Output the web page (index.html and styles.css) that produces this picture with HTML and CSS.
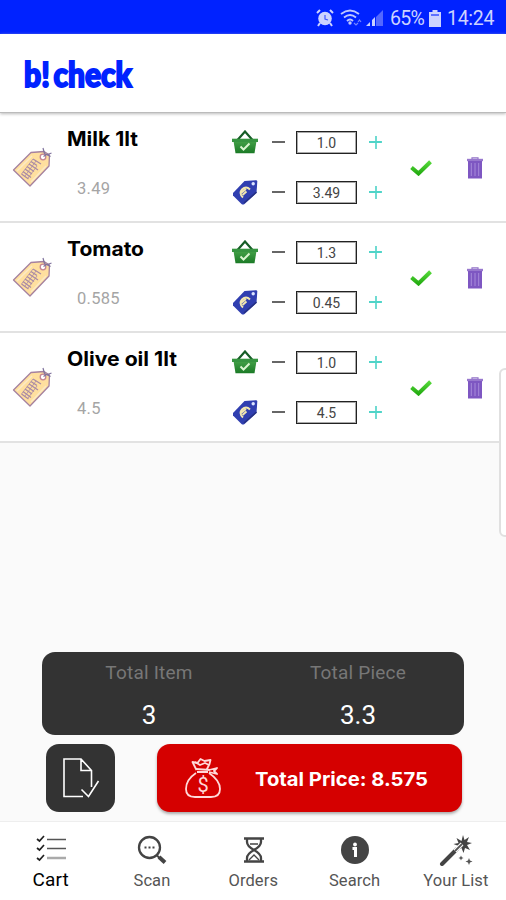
FILE: index.html
```html
<!DOCTYPE html>
<html lang="en">
<head>
<meta charset="utf-8">
<title>b! check</title>
<link rel="stylesheet" href="styles.css">
</head>
<body>
<svg class="defs" width="0" height="0" aria-hidden="true">
  <defs>
    <linearGradient id="green" x1="0" y1="0" x2="0" y2="1"><stop offset="0" stop-color="#43a047"/><stop offset="1" stop-color="#1b7a26"/></linearGradient>
    <linearGradient id="tick" x1="0" y1="0" x2="0" y2="1"><stop offset="0" stop-color="#55d83a"/><stop offset="1" stop-color="#25ad12"/></linearGradient>
  </defs>
  <symbol id="tag" viewBox="0 0 40 42">
    <path d="M1.500 24 19 6.500 32 5.500 37.500 9 37 20 18 40Z" fill="#ffdf9e" stroke="#a5819f" stroke-width="1.300" stroke-linejoin="round"/>
    <path d="M5 25 20 10M19 36 34 20" stroke="#fbeac6" stroke-width="1.500"/>
    <g stroke="#a98aa6" stroke-width="1.300"><path d="m21 13 8 5M19 15.500l6 4M17 18l9 6M15 20.500l7 5M13 23l7 5M11 25.500l8 6M9.500 28l7 5"/><path d="M21 13 9.500 28M24 15 13 30M25 20 16 32" stroke-width=".8"/></g>
    <circle cx="31" cy="11" r="2.800" fill="#fff" stroke="#c58493" stroke-width="1.300"/>
    <path d="m31.500 10.500 3-2M31 2l1.500 5.500 6 3M39.500 7l-5 2" fill="none" stroke="#80739d" stroke-width="1.200"/>
  </symbol>
  <symbol id="basket" viewBox="0 0 28 24">
    <path d="m6.500 10 7.500-8.500 7.500 8.500" fill="none" stroke="#155c26" stroke-width="2.200"/>
    <path d="M2.500 11h23l-2 12.300h-19Z" fill="url(#green)"/>
    <path d="M1 8.700h26v3.300H1z" fill="#369440"/>
    <path d="m9.500 16.500 3 3 6-6" fill="none" stroke="#d9f5cf" stroke-width="2"/>
  </symbol>
  <symbol id="price" viewBox="0 0 28 28">
    <path d="M2 15 13.500 3l11.500-.8q1.300 0 1.300 1.300L25.500 15 13.500 26q-1.500 1.200-3 0L2 17.500Z" fill="#303fb0"/>
    <path d="M13 25 25.500 14" stroke="#263182" stroke-width="1.500"/>
    <circle cx="22.200" cy="5.800" r="1.700" fill="#dce4ff"/>
    <path d="M19 11.500q-4-4-8 0-3.500 4 1 8M10 15l5-4M11.500 17l4-3.500" fill="none" stroke="#f3e8b0" stroke-width="1.900"/>
  </symbol>
  <symbol id="check" viewBox="0 0 22 16"><path d="m1.500 7.500 7 6L20.500 1.800" fill="none" stroke="url(#tick)" stroke-width="4"/></symbol>
  <symbol id="trash" viewBox="0 0 18 22">
    <path d="M6 2V.8h6V2" fill="none" stroke="#9273c8" stroke-width="1.200"/>
    <path d="M1 1.800h16v2.400H1z" fill="#9878ce"/><path d="M2 4h14v17.500H2z" fill="#7e57c2"/>
    <path d="M5.300 6v13M9 6v13M12.700 6v13" stroke="#a78bda" stroke-width="1"/>
  </symbol>
</svg>

<div class="status">
  <svg width="18" height="18" viewBox="0 0 18 18"><circle cx="9" cy="9.500" r="6.800" fill="#ccd3ff"/><path d="m1 4 3-3M17 4l-3-3M4 14l-2 3M14 14l2 3" stroke="#ccd3ff" stroke-width="2"/><path d="M9 6v4l3 1" fill="none" stroke="#4057ff" stroke-width="1.200"/></svg>
  <svg class="wifi" width="22" height="18" viewBox="0 0 22 18"><path d="M1 5q9-7 18 0M4 8.500q6-5 12 0M7 12q3-3 6 0" fill="none" stroke="#bec7ff" stroke-width="1.800"/><circle cx="10" cy="14" r="1.700" fill="#bec7ff"/><path d="m14 14 2 2 2-2M18 13l1.500-2 1.500 2" fill="none" stroke="#7483ff" stroke-width="1.200"/></svg>
  <svg class="signal" width="18" height="18" viewBox="0 0 18 18"><path d="M0 17 4 13v4ZM6 11l3-3v9H6Z" fill="#c8d0ff"/><path d="m10 8 7-7v16h-7Z" fill="#5468ff"/></svg>
  <span class="pct">65%</span>
  <svg class="batt" width="12" height="17" viewBox="0 0 12 17"><path d="M3.500 0h5v2H12v15H0V2h3.500Z" fill="#ccd3ff"/><path d="M2 5h8" stroke="#5266ff" stroke-width="1.800"/></svg>
  <span class="time">14:24</span>
</div>

<header class="header">
  <svg class="logo" width="114" height="44" viewBox="0 0 114 44"><text class="logo-text" x="2" y="31" textLength="108" lengthAdjust="spacingAndGlyphs">b! check</text></svg>
</header>

<main class="list">
  <section class="row">
    <svg class="tag" width="40" height="42"><use href="#tag"/></svg>
    <div class="info"><svg class="name" width="150" height="28"><text x="1" y="21" textLength="71" lengthAdjust="spacingAndGlyphs">Milk 1lt</text></svg><span class="unit">3.49</span></div>
    <div class="controls">
      <div class="line"><svg width="28" height="24"><use href="#basket"/></svg><i class="minus"></i><span class="box">1.0</span><i class="plus"></i></div>
      <div class="line"><svg width="28" height="28"><use href="#price"/></svg><i class="minus"></i><span class="box">3.49</span><i class="plus"></i></div>
    </div>
    <svg class="check" width="22" height="16"><use href="#check"/></svg>
    <svg class="trash" width="18" height="22"><use href="#trash"/></svg>
  </section>
  <section class="row">
    <svg class="tag" width="40" height="42"><use href="#tag"/></svg>
    <div class="info"><svg class="name" width="150" height="28"><text x="1" y="21" textLength="77" lengthAdjust="spacingAndGlyphs">Tomato</text></svg><span class="unit">0.585</span></div>
    <div class="controls">
      <div class="line"><svg width="28" height="24"><use href="#basket"/></svg><i class="minus"></i><span class="box">1.3</span><i class="plus"></i></div>
      <div class="line"><svg width="28" height="28"><use href="#price"/></svg><i class="minus"></i><span class="box">0.45</span><i class="plus"></i></div>
    </div>
    <svg class="check" width="22" height="16"><use href="#check"/></svg>
    <svg class="trash" width="18" height="22"><use href="#trash"/></svg>
  </section>
  <section class="row">
    <svg class="tag" width="40" height="42"><use href="#tag"/></svg>
    <div class="info"><svg class="name" width="150" height="28"><text x="1" y="21" textLength="110" lengthAdjust="spacingAndGlyphs">Olive oil 1lt</text></svg><span class="unit">4.5</span></div>
    <div class="controls">
      <div class="line"><svg width="28" height="24"><use href="#basket"/></svg><i class="minus"></i><span class="box">1.0</span><i class="plus"></i></div>
      <div class="line"><svg width="28" height="28"><use href="#price"/></svg><i class="minus"></i><span class="box">4.5</span><i class="plus"></i></div>
    </div>
    <svg class="check" width="22" height="16"><use href="#check"/></svg>
    <svg class="trash" width="18" height="22"><use href="#trash"/></svg>
  </section>
</main>
<div class="edge"></div>

<div class="bottom">
  <section class="summary">
    <div><span class="label">Total Item</span><span class="value">3</span></div>
    <div><span class="label">Total Piece</span><span class="value">3.3</span></div>
  </section>
  <div class="actions">
    <div class="doc"><svg width="40" height="44" viewBox="0 0 40 44" fill="none" stroke="#fff" stroke-width="1.600"><path d="M22 40.500H3V3h17l10.500 11.500V31M20 3v11.500h10.500"/><path d="m20.500 33.500 7 7L37.500 25"/></svg></div>
    <div class="total">
      <svg width="38" height="42" viewBox="0 0 38 42" fill="none" stroke="#ffd9d9" stroke-width="1.800" stroke-linejoin="round"><path d="M12.500 13 8.500 5l5 1 3-4 4 2 6-1-1 4-3 6"/><path d="m11 5 5 3 5-2 4 2M12 12l14 1M13 15h11M25 13l8-2-3 3 3 3-8-2"/><path d="M12 16C6 20 2 26 2 32q0 8 9 8h16q9 0 9-8c0-6-5-12-11-16"/><text class="dollar" x="19" y="35">$</text></svg>
      <svg class="total-label" width="178" height="28"><text x="1" y="21" textLength="173" lengthAdjust="spacingAndGlyphs">Total Price: 8.575</text></svg>
    </div>
  </div>
</div>

<nav class="nav">
  <a class="active"><svg width="32" height="32" viewBox="0 0 32 32" fill="none" stroke="#222" stroke-width="1.700"><path d="m2 5 2.500 2L9 2M2 14l2.500 2L9 11M2 24l2.500 2L9 21"/><path d="M12 5.500h19M12 14.500h19" stroke="#555"/><path d="M12 24h19" stroke="#aaa" stroke-width="2.500"/></svg><span>Cart</span></a>
  <a><svg width="32" height="32" viewBox="0 0 32 32" fill="none" stroke="#444"><circle cx="13.500" cy="13.500" r="10.500" stroke-width="2.300"/><path d="m20.500 21 3 3" stroke-width="2"/><path d="m23 23 6 5.500" stroke-width="4"/><path d="M8.500 13.500h2M12.500 13.500h2M16.500 13.500h2" stroke-width="2"/></svg><span>Scan</span></a>
  <a><svg width="32" height="32" viewBox="0 0 32 32" fill="none" stroke="#444" stroke-width="2.300"><path d="M7 4.500h20M7 27.500h20M10 5v3q0 4 7 8-7 4-7 8v3M24 5v3q0 4-7 8 7 4 7 8v3"/><path d="m12 26 5-5 5 5M13 10h8" stroke-width="1.300"/></svg><span>Orders</span></a>
  <a><svg width="32" height="32" viewBox="0 0 32 32"><circle cx="16" cy="16" r="14" fill="#444"/><circle cx="16" cy="10.500" r="1.900" fill="#fff"/><path d="M13.500 14.500h3v8.500" fill="none" stroke="#fff" stroke-width="3"/></svg><span>Search</span></a>
  <a><svg width="34" height="32" viewBox="0 0 34 32"><path d="m24 1 1.500 5 4.500-3-2 5 5 1-5 2 3 5-5-2-1.500 5-2-5-5 3 2-5-5-2 5-1-2-5 5 3Z" fill="#444"/><path d="m3 30 15-15" stroke="#444" stroke-width="4" stroke-linecap="round"/><path d="m16 17 7-7" stroke="#fff" stroke-width="4"/><path d="m16 17 7-7" stroke="#555" stroke-width="1.800"/><path d="m30 24 1 2.500 2.500 1L31 28.500 30 31l-1-2.500-2.500-1 2.500-1ZM22 21.500l.8 1.700 1.700.8-1.700.8-.8 1.700-.8-1.700-1.700-.8 1.700-.8Z" fill="#555"/></svg><span>Your List</span></a>
</nav>
</body>
</html>
```
FILE: styles.css
```css
* { box-sizing: border-box; }
body {
  margin: 0; width: 506px; height: 900px; overflow: hidden;
  display: flex; flex-direction: column; position: relative;
  background: #fafafa; font-family: Roboto, sans-serif; color: #111;
}
svg { display: block; flex: none; }
.defs { position: absolute; }

.status {
  height: 34px; flex: none; background: #0022ff; color: #ccd3ff;
  display: flex; align-items: center; justify-content: flex-end;
  padding: 2px 12px 0 0; font-size: 19.5px;
}
.wifi { margin-left: 6px; }
.signal { margin-left: 4px; }
.pct { margin-left: 6px; width: 34px; letter-spacing: -0.7px; }
.batt { margin-left: 5px; }
.time { margin-left: 6px; width: 47px; letter-spacing: -0.3px; }

.header {
  height: 79px; flex: none; background: #fff; padding: 22px 0 0 22px;
  border-bottom: 1px solid #bbb; box-shadow: 0 1px 3px #bbb; z-index: 1;
}
.logo { overflow: visible; }
.logo-text { font: 900 35px Lato, sans-serif; fill: #0022ff; stroke: #0022ff; stroke-width: 2px; word-spacing: -4px; }

.list { flex: none; }
.row {
  height: 110px; background: #fff; border-bottom: 2px solid #e2e2e2;
  display: flex; align-items: flex-start; padding-left: 12px;
}
.tag { margin-top: 33px; }
.info { width: 165px; margin-left: 14px; padding-top: 12px; }
.name text { font: 700 20px Inter, sans-serif; fill: #000; }
.unit {
  display: block; margin: 26px 0 0 11px; font-size: 16.5px; line-height: 20px;
  color: #a5a5a5; letter-spacing: 0.3px;
}
.controls { width: 151px; padding-top: 15px; }
.line { display: flex; align-items: center; height: 28px; margin-bottom: 22px; }
.minus { width: 13px; height: 2px; background: #666; margin: 0 11px 0 13px; }
.box {
  width: 62px; height: 23px; border: 1px solid #222; text-align: center;
  font-size: 14px; line-height: 22px; color: #444; box-shadow: inset 0 0 0 1px #aaa;
}
.plus {
  width: 13px; height: 13px; margin-left: 12px;
  background: linear-gradient(#50d4c8, #50d4c8) center / 13px 2px no-repeat,
    linear-gradient(#70dbd2, #70dbd2) center / 2px 13px no-repeat;
}
.check { margin: 47px 0 0 28px; }
.trash { margin: 44px 0 0 34px; }

.edge {
  position: absolute; left: 499px; top: 368px; width: 12px; height: 169px;
  border: 2px solid #e0e0e0; border-radius: 7px; background: #fff;
}

.bottom { margin-top: auto; padding: 0 42px; height: 169px; flex: none; }
.summary {
  height: 83px; width: 422px; background: #333; border-radius: 13px;
  display: grid; grid-template-columns: 1fr 1fr; text-align: center; padding-top: 9px;
}
.summary span { display: block; }
.summary div:first-child { padding-left: 3px; }
.summary div:last-child { padding-right: 1px; }
.label { font-size: 19px; line-height: 24px; color: #777; letter-spacing: 0.2px; }
.value { font-size: 26px; line-height: 30px; color: #fff; margin-top: 15px; }
.actions { display: flex; margin: 9px 0 0 4px; gap: 42px; }
.doc, .total { height: 68px; border-radius: 13px; display: flex; align-items: center; }
.doc { width: 69px; background: #333; padding-left: 15px; }
.total { width: 305px; background: #d50000; padding-left: 27px; box-shadow: 0 2px 3px #aaa; }
.dollar { font: 20px Roboto, sans-serif; text-anchor: middle; fill: #ffd9d9; stroke: none; }
.total-label { margin: 2px 0 0 32px; }
.total-label text { font: 700 19px Inter, sans-serif; fill: #fff; }

.nav {
  height: 79px; flex: none; background: #fff; border-top: 1px solid #eee;
  display: grid; grid-template-columns: repeat(5, 101.3px);
}
.nav a {
  display: flex; flex-direction: column; align-items: center; padding-top: 12px;
  font-size: 16.5px; line-height: 20px; color: #555; letter-spacing: 0.1px;
}
.nav span { margin-top: 5px; white-space: nowrap; }
.nav .active { font-size: 19px; color: #000; }
.nav .active span { margin-top: 4px; }
```
